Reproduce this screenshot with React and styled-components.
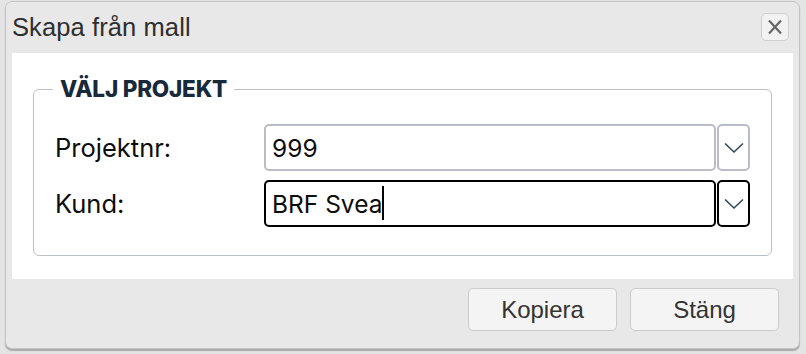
import React from "react";
import styled, { createGlobalStyle } from "styled-components";

const Global = createGlobalStyle`
  html, body { margin: 0; padding: 0; }
  body {
    background: #e4e4e4;
    width: 806px;
    height: 354px;
    overflow: hidden;
    font-family: Inter, "Liberation Sans", sans-serif;
  }
`;

const Dialog = styled.div`
  box-sizing: border-box;
  margin: 1px 6px 0 5px;
  width: 795px;
  height: 348px;
  background: #e8e8e8;
  border: 1px solid #c4c4c4;
  border-radius: 7px;
  box-shadow: 0 2px 1px rgba(0,0,0,0.25);
  display: flex;
  flex-direction: column;
`;

const TitleBar = styled.div`
  height: 51px;
  display: flex;
  align-items: center;
  justify-content: space-between;
  padding: 0 10px 0 6px;
`;

const Title = styled.span`
  font-family: "Liberation Sans", Arial, sans-serif;
  font-size: 25.5px;
  line-height: 30px;
  color: #2e2e2e;
  letter-spacing: 0.1px;
  margin-top: -1px;
`;

const CloseButton = styled.button`
  width: 28px;
  height: 28px;
  padding: 0;
  margin-top: -2px;
  border: 1px solid #cfcfcf;
  border-radius: 5px;
  background: #f2f2f2;
  display: flex;
  align-items: center;
  justify-content: center;
`;

const Content = styled.div`
  margin: 0 6px;
  height: 226px;
  background: #fff;
  box-sizing: border-box;
  padding: 23px 21px 0 21px;
`;

const Fieldset = styled.fieldset`
  margin: 0;
  border: 1.5px solid #b9c1c6;
  border-radius: 6px;
  padding: 22px 21px 28px 21px;
  display: flex;
  flex-direction: column;
  gap: 9px;
`;

const Legend = styled.legend`
  font-weight: 800;
  font-size: 22.5px;
  line-height: 26px;
  color: #17293a;
  padding: 0 7px;
  margin-left: -2px;
  letter-spacing: -0.2px;
`;

const Row = styled.div`
  display: flex;
  align-items: center;
`;

const Label = styled.label`
  width: 209px;
  font-size: 25.5px;
  color: #0d0d0d;
`;

const Input = styled.div`
  box-sizing: border-box;
  width: 452px;
  height: 47px;
  border: ${p => (p.$focused ? "2px solid #000" : "2px solid #babcca")};
  border-radius: 5px;
  display: flex;
  align-items: center;
  padding-left: 6px;
  font-size: 24.5px;
  color: #0d0d0d;
`;

const Caret = styled.span`
  display: inline-block;
  width: 2px;
  height: 34px;
  margin-top: -2px;
  background: #000;
`;

const DropButton = styled.div`
  box-sizing: border-box;
  width: 33px;
  height: 47px;
  margin-left: 1px;
  border: ${p => (p.$focused ? "2px solid #000" : "2px solid #babcca")};
  border-radius: 5px;
  display: flex;
  align-items: center;
  justify-content: center;
`;

const Footer = styled.div`
  flex: 1;
  display: flex;
  justify-content: flex-end;
  align-items: flex-start;
  gap: 13px;
  padding: 9px 20px 0 0;
`;

const Button = styled.button`
  width: 149px;
  height: 43px;
  background: #f4f4f4;
  border: 1.5px solid #cbcbcb;
  border-radius: 5px;
  font-family: "Liberation Sans", Arial, sans-serif;
  font-size: 24px;
  color: #333;
`;

const Chevron = () => (
  <svg width="22" height="12" viewBox="0 0 22 12">
    <path d="M2 1.5 L11 10 L20 1.5" fill="none" stroke="#34465a" strokeWidth="1.6" />
  </svg>
);

export default function App() {
  return (
    <>
      <Global />
      <Dialog>
        <TitleBar>
          <Title>Skapa från mall</Title>
          <CloseButton>
            <svg width="18" height="18" viewBox="0 0 18 18">
              <path d="M3 2.5 L15 15.5 M15 2.5 L3 15.5" stroke="#666" strokeWidth="2.2" />
            </svg>
          </CloseButton>
        </TitleBar>
        <Content>
          <Fieldset>
            <Legend>VÄLJ PROJEKT</Legend>
            <Row>
              <Label>Projektnr:</Label>
              <Input>999</Input>
              <DropButton><Chevron /></DropButton>
            </Row>
            <Row>
              <Label>Kund:</Label>
              <Input $focused>BRF Svea<Caret /></Input>
              <DropButton $focused><Chevron /></DropButton>
            </Row>
          </Fieldset>
        </Content>
        <Footer>
          <Button>Kopiera</Button>
          <Button>Stäng</Button>
        </Footer>
      </Dialog>
    </>
  );
}
